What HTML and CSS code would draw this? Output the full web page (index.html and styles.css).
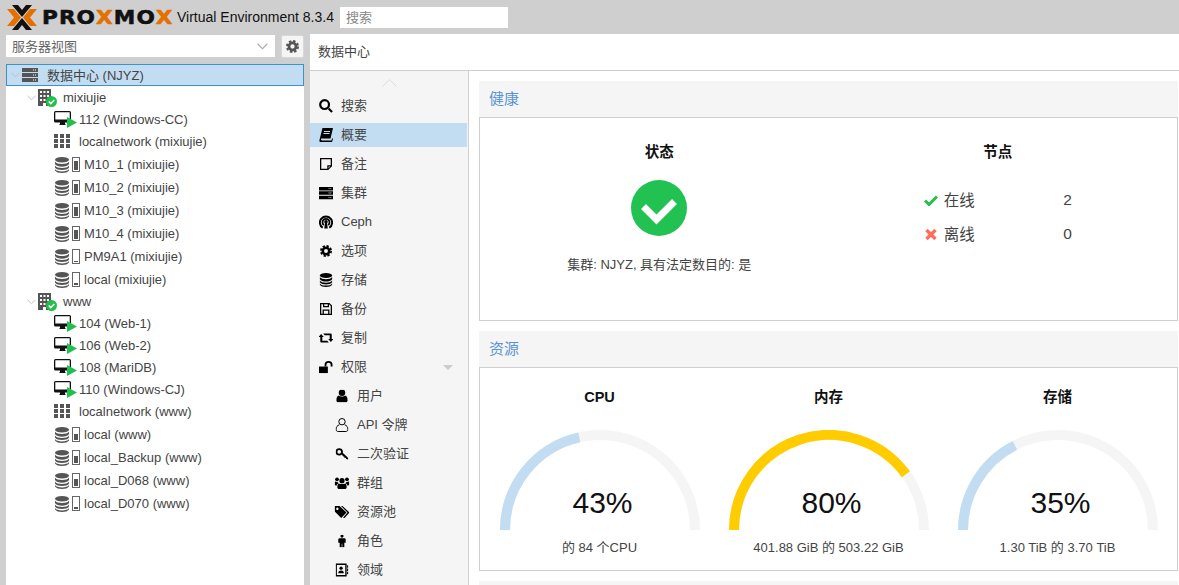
FILE: index.html
```html
<!DOCTYPE html>
<html lang="zh-CN">
<head>
  <meta charset="UTF-8" />
  <title>NJYZ - Proxmox Virtual Environment</title>
  <link rel="stylesheet" href="styles.css">
</head>
<body>
  <svg class="defs" aria-hidden="true">
    <symbol id="i-server" viewBox="0 0 16 14">
      <path d="M0 0h16v4H0zM0 5h16v4H0zM0 10h16v4H0z"/>
      <path fill="#fff" d="M11 1.500h1v1h-1zM13 1.500h1v1h-1zM11 6.500h1v1h-1zM13 6.500h1v1h-1zM11 11.500h1v1h-1zM13 11.500h1v1h-1z"/>
    </symbol>
    <symbol id="i-building" viewBox="0 0 13 17">
      <path d="M0 0h13v17H8v-3H5v3H0z"/>
      <path fill="#fff" d="M2 2h2v2H2zM5.500 2h2v2h-2zM9 2h2v2H9zM2 6h2v2H2zM5.500 6h2v2h-2zM9 6h2v2H9zM2 10h2v2H2zM5.500 10h2v2h-2zM9 10h2v2H9z"/>
    </symbol>
    <symbol id="i-desktop" viewBox="0 0 17 14">
      <path d="M1.500 0h14A1.500 1.500 0 0 1 17 1.500V10a1.500 1.500 0 0 1-1.500 1.500H11V13l1 1H5l1-1v-1.500H1.500A1.500 1.500 0 0 1 0 10V1.500A1.500 1.500 0 0 1 1.500 0zM1.300 1.300V8.500h14.400V1.300z" fill-rule="evenodd"/>
    </symbol>
    <symbol id="i-grid" viewBox="0 0 16 14">
      <path d="M0 0h4v4H0zM6 0h4v4H6zM12 0h4v4h-4zM0 5h4v4H0zM6 5h4v4H6zM12 5h4v4h-4zM0 10h4v4H0zM6 10h4v4H6zM12 10h4v4h-4z"/>
    </symbol>
    <symbol id="i-db" viewBox="0 0 14 16">
      <ellipse cx="7" cy="2.800" rx="7" ry="2.800"/>
      <path d="M0 4.500C1 6.300 4 7 7 7s6-.7 7-2.500V7C13 8.800 10 9.800 7 9.800S1 8.800 0 7zM0 8.500C1 10.300 4 11 7 11s6-.7 7-2.500V10.500C13 12.300 10 13 7 13S1 12.300 0 10.500zM0 12c1 1.800 4 2.400 7 2.400s6-.6 7-2.400v1.500C13 15.200 10 16 7 16s-6-.8-7-2.500z"/>
    </symbol>
    <symbol id="i-search" viewBox="0 0 14 14">
      <circle cx="5.600" cy="5.600" r="4.400" fill="none" stroke="currentColor" stroke-width="2.200"/>
      <path d="M8.800 10.300l1.500-1.500 3.500 3.500-1.500 1.500z"/>
    </symbol>
    <symbol id="i-book" viewBox="0 0 14 14">
      <path d="M3.500 0H14l-2.500 10.500H3C2 10.500 1.800 11.200 2 11.700c.2.500.7.800 1.300.8H12.500l.6-2.200.9.500-1.300 4.200H2.800C1 15 0 13.300.6 11.500z"/>
      <path fill="#c2ddf2" d="M5 3h6v1H5zM4.500 5h6v1h-6z"/>
    </symbol>
    <symbol id="i-note" viewBox="0 0 14 14">
      <path fill-rule="evenodd" d="M0 0h14v9.500L9.500 14H0zM1.500 1.500v11H8.500V8.500h4v-7zM10 10v2l2-2z"/>
    </symbol>
    <symbol id="i-ceph" viewBox="0 0 16 16">
      <g fill="none" stroke="currentColor">
        <path stroke-width="2.200" d="M4.200 14.500A7 7 0 1 1 11.800 14.500"/>
        <path stroke-width="2" d="M5.500 11.500A4 4 0 1 1 10.500 11.500"/>
      </g>
      <circle cx="8" cy="7.600" r="2"/>
      <path d="M6.800 9h2.400l.8 6.500H6z"/>
    </symbol>
    <symbol id="i-gear" viewBox="0 0 14 14">
      <circle cx="7" cy="7" r="3.800" fill="none" stroke="currentColor" stroke-width="3"/>
      <circle cx="7" cy="7" r="6" fill="none" stroke="currentColor" stroke-width="2" stroke-dasharray="2.700 2"/>
    </symbol>
    <symbol id="i-floppy" viewBox="0 0 14 14">
      <path fill-rule="evenodd" d="M0 0h11l3 3v11H0zM1.500 1.500v11H3V7.500h8v5h1.500V3.600L10.500 1.500V5h-7V1.500zM4.500 9v3.500h5V9zM5 1.500V3.500h4V1.500z"/>
    </symbol>
    <symbol id="i-retweet" viewBox="0 0 17 12">
      <path d="M3 1.500L6 5H4.300v4H10l1.700 2H3.500A1.300 1.300 0 0 1 2 9.700V5H0zM14 10.500L11 7h1.700V3H7L5.300 1h8.200A1.300 1.300 0 0 1 15 2.300V7h2z"/>
    </symbol>
    <symbol id="i-unlock" viewBox="0 0 15 13">
      <path d="M0 6h9.500v7H0z"/>
      <path fill="none" stroke="currentColor" stroke-width="2" d="M7 6V4.200A3 3 0 0 1 13.500 4.200V6"/>
    </symbol>
    <symbol id="i-user" viewBox="0 0 12 14">
      <circle cx="6" cy="3.500" r="3.500"/>
      <path d="M2.500 6.500C4 8 8 8 9.500 6.500 11 7 12 8.500 12 11.500c0 1.500-1 2.500-2.200 2.500H2.200C1 14 0 13 0 11.500 0 8.500 1 7 2.500 6.500z"/>
    </symbol>
    <symbol id="i-user-o" viewBox="0 0 13 14">
      <g fill="none" stroke="currentColor">
        <circle cx="6.500" cy="3.700" r="3.200"/>
        <path d="M3.800 6.800C1.800 7.400.6 9 .6 11.300.6 12.800 1.500 13.500 2.600 13.500h7.800c1.100 0 2-.7 2-2.200 0-2.300-1.200-3.900-3.200-4.500"/>
      </g>
    </symbol>
    <symbol id="i-key" viewBox="0 0 14 13">
      <circle cx="4" cy="4.200" r="3" fill="none" stroke="currentColor" stroke-width="2"/>
      <path d="M6.300 6.200l1.200-1.200 6.500 6-.8 1.500-1.700-.5-.5-1.500-1.200.3-.5-1.500-1-.2z"/>
    </symbol>
    <symbol id="i-users" viewBox="0 0 16 13">
      <circle cx="8" cy="4" r="2.800"/>
      <circle cx="2.700" cy="2.500" r="2"/>
      <circle cx="13.300" cy="2.500" r="2"/>
      <path d="M4 7.500C5 6.800 6 7.500 8 7.500s3-.7 4-0c.8.800 1 2.500 1 3.500 0 1.200-.8 2-2 2H5c-1.200 0-2-.8-2-2 0-1 .2-2.700 1-3.500zM0 7c0-1.500.7-2 1.300-2C2 5.500 3 5.800 3.800 5.700c0 .5.300 1 .7 1.300C3 7.300 2.200 8.500 2.200 9.300 1 9.300 0 8.800 0 7zM16 7c0-1.500-.7-2-1.300-2-.7.500-1.700.8-2.500.7 0 .5-.3 1-.7 1.300 1.500.3 2.300 1.500 2.300 2.300 1.200 0 2.200-.5 2.200-2.300z"/>
    </symbol>
    <symbol id="i-tags" viewBox="0 0 15 12">
      <path fill-rule="evenodd" d="M0 0h5l7 6.500-5.300 5.500L0 5.200zM2.800 1.600a1.200 1.200 0 1 0 .1 0z"/>
      <path d="M6.500 0h1.500l7 6.500L10 12l-1.500-.3L13 6.500z"/>
    </symbol>
    <symbol id="i-male" viewBox="0 0 8 14">
      <circle cx="4" cy="1.700" r="1.700"/>
      <path d="M1.500 4h5C7.400 4 8 4.600 8 5.500V9H6.500v5H4.300V10h-.6v4H1.500V9H0V5.500C0 4.600.6 4 1.500 4z"/>
    </symbol>
    <symbol id="i-address" viewBox="0 0 14 14">
      <path fill-rule="evenodd" d="M0 0h12v14H0zM1.500 1.500v11h9v-11z"/>
      <circle cx="6" cy="5" r="1.800"/>
      <path d="M3 10.500c0-2 1-3 3-3s3 1 3 3zM12.500 2H14v2.500h-1.500zM12.500 5.500H14V8h-1.500zM12.500 9H14v2.500h-1.500z"/>
    </symbol>
  </svg>

  <header class="topbar">
    <div class="logo">
      <svg class="logo-mark" viewBox="0 0 30 25">
        <path fill="#e57000" d="M0 4h7l7 8.500L7 21H0l7-8.500zM30 4h-7l-7 8.500 7 8.500h7l-7-8.500z"/>
        <path fill="#111" d="M5 0h6l4 5 4-5h6L15 12zM5 25h6l4-5 4 5h6L15 13z"/>
      </svg>
      <span class="logo-word">PRO<b>X</b>MO<b>X</b></span>
    </div>
    <span class="version">Virtual Environment 8.3.4</span>
    <div class="search-box">搜索</div>
  </header>

  <div class="page">
    <aside class="sidebar">
      <div class="view-row">
        <div class="combo">
          <span class="combo-text">服务器视图</span>
          <svg class="chev" viewBox="0 0 10 6"><path d="M.5.500L5 5 9.500.500"/></svg>
        </div>
        <button class="gear-btn"><svg class="ic"><use href="#i-gear"/></svg></button>
      </div>

      <div class="tree">
        <div class="row root">
          <svg class="chev tw" viewBox="0 0 10 6"><path d="M.5.500L5 5 9.500.500"/></svg>
          <svg class="t-server"><use href="#i-server"/></svg>
          <span class="root-text">数据中心 (NJYZ)</span>
        </div>

        <div class="row node">
          <svg class="chev tw" viewBox="0 0 10 6"><path d="M.5.500L5 5 9.500.500"/></svg>
          <span class="node-ic">
            <svg class="t-building"><use href="#i-building"/></svg>
            <svg class="badge" viewBox="0 0 11 11"><circle cx="5.500" cy="5.500" r="5.500"/><path d="M2.800 5.500l2 2 3.500-3.500"/></svg>
          </span>
          <span>mixiujie</span>
        </div>
        <div class="row vm">
          <span class="vm-ic"><svg class="t-desktop"><use href="#i-desktop"/></svg><svg class="play" viewBox="0 0 10 11"><path d="M0 0l10 5.500L0 11z"/></svg></span>
          <span>112 (Windows-CC)</span>
        </div>
        <div class="row sdn"><svg class="t-grid"><use href="#i-grid"/></svg><span>localnetwork (mixiujie)</span></div>
        <div class="row store"><svg class="t-db"><use href="#i-db"/></svg><span class="usage"><i style="height:80%"></i></span><span>M10_1 (mixiujie)</span></div>
        <div class="row store"><svg class="t-db"><use href="#i-db"/></svg><span class="usage"><i style="height:80%"></i></span><span>M10_2 (mixiujie)</span></div>
        <div class="row store"><svg class="t-db"><use href="#i-db"/></svg><span class="usage"><i style="height:80%"></i></span><span>M10_3 (mixiujie)</span></div>
        <div class="row store"><svg class="t-db"><use href="#i-db"/></svg><span class="usage"><i style="height:80%"></i></span><span>M10_4 (mixiujie)</span></div>
        <div class="row store"><svg class="t-db"><use href="#i-db"/></svg><span class="usage"><i style="height:10%"></i></span><span>PM9A1 (mixiujie)</span></div>
        <div class="row store"><svg class="t-db"><use href="#i-db"/></svg><span class="usage"><i style="height:15%"></i></span><span>local (mixiujie)</span></div>

        <div class="row node">
          <svg class="chev tw" viewBox="0 0 10 6"><path d="M.5.500L5 5 9.500.500"/></svg>
          <span class="node-ic">
            <svg class="t-building"><use href="#i-building"/></svg>
            <svg class="badge" viewBox="0 0 11 11"><circle cx="5.500" cy="5.500" r="5.500"/><path d="M2.800 5.500l2 2 3.500-3.500"/></svg>
          </span>
          <span>www</span>
        </div>
        <div class="row vm"><span class="vm-ic"><svg class="t-desktop"><use href="#i-desktop"/></svg><svg class="play" viewBox="0 0 10 11"><path d="M0 0l10 5.500L0 11z"/></svg></span><span>104 (Web-1)</span></div>
        <div class="row vm"><span class="vm-ic"><svg class="t-desktop"><use href="#i-desktop"/></svg><svg class="play" viewBox="0 0 10 11"><path d="M0 0l10 5.500L0 11z"/></svg></span><span>106 (Web-2)</span></div>
        <div class="row vm"><span class="vm-ic"><svg class="t-desktop"><use href="#i-desktop"/></svg><svg class="play" viewBox="0 0 10 11"><path d="M0 0l10 5.500L0 11z"/></svg></span><span>108 (MariDB)</span></div>
        <div class="row vm"><span class="vm-ic"><svg class="t-desktop"><use href="#i-desktop"/></svg><svg class="play" viewBox="0 0 10 11"><path d="M0 0l10 5.500L0 11z"/></svg></span><span>110 (Windows-CJ)</span></div>
        <div class="row sdn"><svg class="t-grid"><use href="#i-grid"/></svg><span>localnetwork (www)</span></div>
        <div class="row store"><svg class="t-db"><use href="#i-db"/></svg><span class="usage"><i style="height:55%"></i></span><span>local (www)</span></div>
        <div class="row store"><svg class="t-db"><use href="#i-db"/></svg><span class="usage"><i style="height:60%"></i></span><span>local_Backup (www)</span></div>
        <div class="row store"><svg class="t-db"><use href="#i-db"/></svg><span class="usage"><i style="height:60%"></i></span><span>local_D068 (www)</span></div>
        <div class="row store"><svg class="t-db"><use href="#i-db"/></svg><span class="usage"><i style="height:15%"></i></span><span>local_D070 (www)</span></div>
      </div>
    </aside>

    <main class="main">
      <div class="title-bar">数据中心</div>
      <div class="split">
        <nav class="tabs">
          <div class="tab-up"><svg viewBox="0 0 15 8"><path d="M.5 7.500L7.500.700l7 6.800"/></svg></div>
          <a class="tab"><svg class="ic i14"><use href="#i-search"/></svg>搜索</a>
          <a class="tab active"><svg class="ic i14"><use href="#i-book"/></svg>概要</a>
          <a class="tab"><svg class="ic i12"><use href="#i-note"/></svg>备注</a>
          <a class="tab"><svg class="ic i14"><use href="#i-server"/></svg>集群</a>
          <a class="tab"><svg class="ic i14"><use href="#i-ceph"/></svg>Ceph</a>
          <a class="tab"><svg class="ic i12"><use href="#i-gear"/></svg>选项</a>
          <a class="tab"><svg class="ic i14"><use href="#i-db"/></svg>存储</a>
          <a class="tab"><svg class="ic i12"><use href="#i-floppy"/></svg>备份</a>
          <a class="tab"><svg class="ic i15"><use href="#i-retweet"/></svg>复制</a>
          <a class="tab"><svg class="ic i14"><use href="#i-unlock"/></svg>权限<span class="expand"></span></a>
          <a class="tab sub"><svg class="ic i12"><use href="#i-user"/></svg>用户</a>
          <a class="tab sub"><svg class="ic i13"><use href="#i-user-o"/></svg>API 令牌</a>
          <a class="tab sub"><svg class="ic i13"><use href="#i-key"/></svg>二次验证</a>
          <a class="tab sub"><svg class="ic i15"><use href="#i-users"/></svg>群组</a>
          <a class="tab sub"><svg class="ic i15"><use href="#i-tags"/></svg>资源池</a>
          <a class="tab sub"><svg class="ic i12"><use href="#i-male"/></svg>角色</a>
          <a class="tab sub"><svg class="ic i13"><use href="#i-address"/></svg>领域</a>
        </nav>

        <section class="content">
          <div class="panel">
            <h2 class="panel-head">健康</h2>
            <div class="panel-body health">
              <div class="col">
                <h3>状态</h3>
                <svg class="status-ok" viewBox="0 0 56 56">
                  <circle cx="28" cy="28" r="28"/>
                  <path d="M12.500 26.500l13 13 18-18"/>
                </svg>
                <p class="note">集群: NJYZ, 具有法定数目的: 是</p>
              </div>
              <div class="col">
                <h3>节点</h3>
                <div class="node-stats">
                  <div class="stat">
                    <svg class="mark" viewBox="0 0 14 11"><path class="ok" d="M1 5.500l4 4L13 1.500"/></svg>
                    <span class="stat-name">在线</span><span>2</span>
                  </div>
                  <div class="stat">
                    <svg class="mark" viewBox="0 0 14 11"><path class="bad" d="M2.500 1l9 9m0-9l-9 9"/></svg>
                    <span class="stat-name">离线</span><span>0</span>
                  </div>
                </div>
              </div>
            </div>
          </div>

          <div class="panel">
            <h2 class="panel-head">资源</h2>
            <div class="panel-body gauges">
              <div class="gauge">
                <h3>CPU</h3>
                <svg viewBox="0 0 200 100">
                  <path class="track" d="M5 100A95 95 0 0 1 195 100"/>
                  <path class="fill" d="M5 100A95 95 0 0 1 79.300 7.300"/>
                  <text x="102.500" y="83">43%</text>
                </svg>
                <p>的 84 个CPU</p>
              </div>
              <div class="gauge">
                <h3>内存</h3>
                <svg viewBox="0 0 200 100">
                  <path class="track" d="M5 100A95 95 0 0 1 195 100"/>
                  <path class="fill warn" d="M5 100A95 95 0 0 1 176.900 44.200"/>
                  <text x="102.500" y="83">80%</text>
                </svg>
                <p>401.88 GiB 的 503.22 GiB</p>
              </div>
              <div class="gauge">
                <h3>存储</h3>
                <svg viewBox="0 0 200 100">
                  <path class="track" d="M5 100A95 95 0 0 1 195 100"/>
                  <path class="fill" d="M5 100A95 95 0 0 1 56.900 15.400"/>
                  <text x="102.500" y="83">35%</text>
                </svg>
                <p>1.30 TiB 的 3.70 TiB</p>
              </div>
            </div>
          </div>

          <div class="panel">
            <h2 class="panel-head"></h2>
          </div>
        </section>
      </div>
    </main>
  </div>
</body>
</html>
```

FILE: styles.css
```css
* {
  box-sizing: border-box;
}
html, body {
  margin: 0;
  height: 585px;
  overflow: hidden;
}
body {
  background: #cfcfcf;
  color: #333;
  font-family: "Liberation Sans", "Noto Sans CJK SC", sans-serif;
  font-size: 13px;
}
.defs {
  display: none;
}
svg {
  display: block;
  flex: none;
  fill: currentColor;
}

/* top bar */
.topbar {
  height: 34px;
  display: flex;
  align-items: center;
}
.logo {
  display: flex;
  align-items: center;
  width: 177px;
  padding-left: 7px;
}
.logo-mark {
  width: 30px;
  height: 25px;
}
.logo-word {
  display: inline-block;
  margin-left: 5px;
  color: #111;
  font-family: "DejaVu Sans", sans-serif;
  font-size: 20px;
  font-weight: 700;
  letter-spacing: 1px;
  line-height: 25px;
  -webkit-text-stroke: 0.6px #111;
  transform: scaleX(1.08);
  transform-origin: left center;
  white-space: nowrap;
}
.logo-word b {
  color: #e57000;
  -webkit-text-stroke: 0.6px #e57000;
}
.version {
  width: 163px;
  color: #111;
  font-size: 14px;
  white-space: nowrap;
}
.search-box {
  width: 168px;
  height: 21px;
  padding-left: 6px;
  background: #fff;
  color: #888;
  line-height: 21px;
}

.page {
  display: flex;
  height: 551px;
}

/* left side */
.sidebar {
  width: 310px;
  padding: 1px 6px 0;
  flex: none;
}
.view-row {
  display: flex;
  gap: 6px;
  height: 23px;
}
.combo {
  flex: 1;
  height: 22px;
  padding: 0 5px 0 6px;
  display: flex;
  align-items: center;
  justify-content: space-between;
  background: #fff;
  color: #666;
}
.combo-text {
  margin-bottom: 2px;
}
.combo .chev {
  margin-right: 2px;
}
.chev {
  width: 11px;
  height: 7px;
  fill: none;
  stroke: #aaa;
}
.gear-btn {
  width: 23px;
  height: 23px;
  padding: 0;
  display: flex;
  align-items: center;
  justify-content: center;
  border: 1px solid #d8d8d8;
  border-radius: 2px;
  background: #f5f5f5;
  color: #555;
}
.gear-btn .ic {
  width: 13px;
  height: 13px;
}
.tree {
  height: 521px;
  margin-top: 6px;
  background: #fff;
  color: #444;
  overflow: hidden;
}
.row {
  height: 23px;
  display: flex;
  align-items: center;
  white-space: nowrap;
}
.root {
  height: 22px;
  margin-bottom: 1px;
  border: 1px solid #3892d4;
  background: #c2ddf2;
  padding-left: 4px;
}
.root-text {
  margin-bottom: 2px;
}
.tw {
  width: 9px;
  height: 6px;
  stroke: #bbb;
}
.t-server {
  width: 16px;
  height: 14px;
  margin: 0 9px 0 2px;
  color: #555;
}
.node {
  height: 21px;
  padding-left: 21px;
}
.node-ic {
  position: relative;
  width: 25px;
  height: 17px;
  margin: 0 0 0 2px;
}
.t-building {
  width: 13px;
  height: 17px;
  color: #555;
}
.badge {
  position: absolute;
  left: 8px;
  top: 7px;
  width: 11px;
  height: 11px;
  fill: #21bf4b;
  stroke: none;
}
.badge path {
  fill: none;
  stroke: #fff;
  stroke-width: 1.600;
}
.vm, .sdn {
  height: 22px;
  padding-left: 48px;
}
.sdn {
  margin-bottom: 1px;
}
.vm-ic {
  position: relative;
  width: 25px;
  height: 16px;
}
.t-desktop {
  width: 17px;
  height: 14px;
  color: #111;
}
.play {
  position: absolute;
  left: 12.500px;
  top: 6px;
  width: 10px;
  height: 11px;
  fill: #21bf4b;
}
.t-grid {
  width: 16px;
  height: 14px;
  margin-right: 9px;
  color: #555;
}
.store {
  padding-left: 49px;
}
.t-db {
  width: 14px;
  height: 16px;
  color: #555;
}
.usage {
  width: 8px;
  height: 15px;
  margin: 0 4px 0 3px;
  display: flex;
  align-items: flex-end;
  padding: 1px;
  border: 1px solid #666;
  background: #fff;
}
.usage i {
  display: block;
  width: 100%;
  background: #555;
}

/* right side */
.main {
  flex: 1;
  background: #fff;
  display: flex;
  flex-direction: column;
}
.title-bar {
  height: 37px;
  padding-left: 8px;
  border-bottom: 1px solid #cfcfcf;
  line-height: 36px;
  color: #444;
}
.split {
  flex: 1;
  display: flex;
  overflow: hidden;
}
.tabs {
  width: 159px;
  flex: none;
  background: #f5f5f5;
  border-right: 1px solid #cfcfcf;
}
.tab-up {
  height: 23px;
  padding: 8px 0 0 72px;
}
.tab-up svg {
  width: 15px;
  height: 8px;
  fill: none;
  stroke: #dcdcdc;
}
.tab {
  position: relative;
  height: 24px;
  margin-bottom: 5px;
  padding-left: 31px;
  display: flex;
  align-items: center;
  color: #444;
  line-height: 22px;
  white-space: nowrap;
}
.tab.active {
  margin-right: 1px;
  background: #c2ddf2;
}
.tab.sub {
  padding-left: 47px;
}
.tab .ic {
  position: absolute;
  left: 16px;
  top: 50%;
  transform: translate(-50%, -50%);
  color: #000;
}
.tab.sub .ic {
  left: 32px;
}
.i12 {
  width: 12px;
  height: 13px;
}
.i13 {
  width: 13px;
  height: 14px;
}
.i14 {
  width: 14px;
  height: 14px;
}
.i15 {
  width: 15px;
  height: 13px;
}
.expand {
  width: 0;
  height: 0;
  margin-left: 76px;
  border-left: 5px solid transparent;
  border-right: 5px solid transparent;
  border-top: 5px solid #ccc;
}
.content {
  flex: 1;
  padding: 10px 1px 0 10px;
}
.panel {
  margin-bottom: 10px;
}
.panel-head {
  height: 36px;
  margin: 0;
  padding-left: 10px;
  background: #f5f5f5;
  color: #5b94d2;
  font-size: 15px;
  font-weight: 400;
  line-height: 36px;
}
.panel-body {
  height: 204px;
  border: 1px solid #cfcfcf;
  background: #fff;
}
h3 {
  margin: 0;
  color: #111;
  font-size: 14.500px;
  font-weight: 700;
  line-height: 20px;
  text-align: center;
}
.health {
  display: grid;
  grid-template-columns: 1fr 1fr;
  padding: 24px 10px 0;
}
.col {
  display: flex;
  flex-direction: column;
  align-items: center;
}
.status-ok {
  width: 56px;
  height: 56px;
  margin-top: 18px;
  fill: #21c251;
}
.status-ok path {
  fill: none;
  stroke: #fff;
  stroke-width: 7;
}
.note {
  margin: 19px 0 0;
  line-height: 20px;
  color: #444;
}
.node-stats {
  width: 148px;
  margin-top: 21px;
}
.stat {
  height: 34px;
  display: flex;
  align-items: center;
  color: #444;
  font-size: 15.500px;
}
.mark {
  width: 14px;
  height: 11px;
  margin-right: 6px;
  fill: none;
}
.mark .ok {
  stroke: #21bf4b;
  stroke-width: 3;
}
.mark .bad {
  stroke: #ff6c59;
  stroke-width: 3.400;
}
.stat-name {
  width: 120px;
  margin-bottom: 2px;
}
.gauges {
  display: grid;
  grid-template-columns: repeat(3, 229px);
  padding: 19px 5px 0;
}
.gauge {
  display: flex;
  flex-direction: column;
  align-items: center;
}
.gauge svg {
  width: 200px;
  height: 100px;
  margin-top: 23px;
  fill: none;
}
.track, .fill {
  stroke-width: 10;
}
.track {
  stroke: #f5f5f5;
}
.fill {
  stroke: #c2ddf2;
}
.fill.warn {
  stroke: #ffcc00;
}
.gauge text {
  fill: #111;
  font-size: 30px;
  text-anchor: middle;
}
.gauge p {
  margin: 8px 0 0;
  color: #444;
  line-height: 20px;
}
```
